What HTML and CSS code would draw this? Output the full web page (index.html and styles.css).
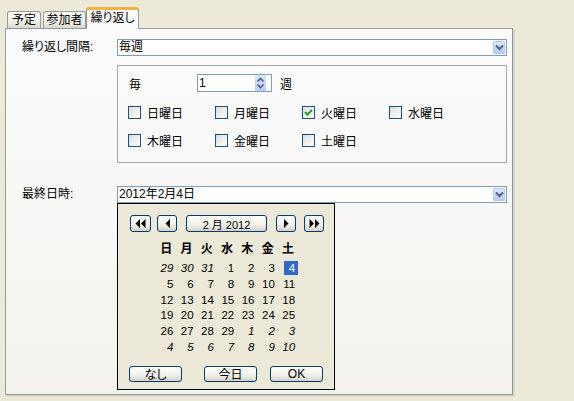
FILE: index.html
```html
<!DOCTYPE html>
<html lang="ja">
<head>
<meta charset="utf-8">
<title>繰り返し</title>
<link rel="stylesheet" href="styles.css">
</head>
<body>
<div class="tabs">
  <div class="tab t1">予定</div>
  <div class="tab t2">参加者</div>
  <div class="tab active">繰り返し</div>
</div>
<div class="panel">
  <div class="row">
    <span class="label">繰り返し間隔:</span>
    <div class="select">
      <span class="val">毎週</span>
      <span class="drop"><svg width="9" height="7" viewBox="0 0 9 7"><path d="M1 1.5 L4.5 5 L8 1.5" fill="none" stroke="#4d6185" stroke-width="2"/></svg></span>
    </div>
  </div>
  <div class="group">
    <div class="every">
      <span class="every-l">毎</span>
      <div class="spin">
        <span class="val">1</span>
        <span class="spinbtn"><svg width="11" height="16" viewBox="0 0 11 16"><path d="M2.5 6.5 L5.5 3.5 L8.5 6.5" fill="none" stroke="#4d6185" stroke-width="1.6"/><path d="M2.5 9.5 L5.5 12.5 L8.5 9.5" fill="none" stroke="#4d6185" stroke-width="1.6"/></svg></span>
      </div>
      <span class="every-r">週</span>
    </div>
    <div class="days">
      <div class="day"><span class="cb"></span><span>日曜日</span></div>
      <div class="day"><span class="cb"></span><span>月曜日</span></div>
      <div class="day"><span class="cb"><svg width="11" height="11" viewBox="0 0 11 11"><path d="M2 5 L4.5 7.5 L9 3" fill="none" stroke="#21a121" stroke-width="2"/></svg></span><span>火曜日</span></div>
      <div class="day"><span class="cb"></span><span>水曜日</span></div>
      <div class="day"><span class="cb"></span><span>木曜日</span></div>
      <div class="day"><span class="cb"></span><span>金曜日</span></div>
      <div class="day"><span class="cb"></span><span>土曜日</span></div>
    </div>
  </div>
  <div class="row row2">
    <span class="label">最終日時:</span>
    <div class="select">
      <span class="val">2012年2月4日</span>
      <span class="drop"><svg width="9" height="7" viewBox="0 0 9 7"><path d="M1 1.5 L4.5 5 L8 1.5" fill="none" stroke="#4d6185" stroke-width="2"/></svg></span>
    </div>
  </div>
  <div class="cal">
    <div class="cal-head">
      <span class="btn nb b1"><svg width="11" height="9" viewBox="0 0 11 9"><path d="M5 0 L0.5 4.5 L5 9 Z M10.5 0 L6 4.5 L10.5 9 Z" fill="#000"/></svg></span>
      <span class="btn nb b2"><svg width="5" height="9" viewBox="0 0 5 9"><path d="M5 0 L0.5 4.5 L5 9 Z" fill="#000"/></svg></span>
      <span class="btn month">2 月 2012</span>
      <span class="btn nb b4"><svg width="5" height="9" viewBox="0 0 5 9"><path d="M0 0 L4.5 4.5 L0 9 Z" fill="#000"/></svg></span>
      <span class="btn nb b5"><svg width="11" height="9" viewBox="0 0 11 9"><path d="M0.5 0 L5 4.5 L0.5 9 Z M6 0 L10.5 4.5 L6 9 Z" fill="#000"/></svg></span>
    </div>
    <div class="grid wk">
      <span>日</span><span>月</span><span>火</span><span>水</span><span>木</span><span>金</span><span>土</span>
    </div>
    <div class="grid dates">
      <span class="o">29</span><span class="o">30</span><span class="o">31</span><span>1</span><span>2</span><span>3</span><span><b class="sel">4</b></span>
      <span>5</span><span>6</span><span>7</span><span>8</span><span>9</span><span>10</span><span>11</span>
      <span>12</span><span>13</span><span>14</span><span>15</span><span>16</span><span>17</span><span>18</span>
      <span>19</span><span>20</span><span>21</span><span>22</span><span>23</span><span>24</span><span>25</span>
      <span>26</span><span>27</span><span>28</span><span>29</span><span class="o">1</span><span class="o">2</span><span class="o">3</span>
      <span class="o">4</span><span class="o">5</span><span class="o">6</span><span class="o">7</span><span class="o">8</span><span class="o">9</span><span class="o">10</span>
    </div>
    <div class="cal-foot">
      <span class="btn fb f1">なし</span>
      <span class="btn fb f2">今日</span>
      <span class="btn fb f3">OK</span>
    </div>
  </div>
</div>
</body>
</html>
```
FILE: styles.css
```css
html, body {
  margin: 0;
  padding: 0;
}
body {
  background: #ece9d8;
  width: 574px;
  height: 401px;
  overflow: hidden;
  font-family: "Liberation Sans", "Noto Sans CJK JP", sans-serif;
  font-size: 12px;
  font-feature-settings: "palt";
  color: #000;
}
.tabs {
  display: flex;
  align-items: flex-end;
  margin-top: 7px;
  height: 21px;
  padding-left: 7px;
}
.tab {
  box-sizing: border-box;
  height: 17px;
  border: 1px solid #919b9c;
  border-bottom: none;
  border-radius: 3px 3px 0 0;
  background: linear-gradient(#ffffff, #ecebe6 70%, #d8d5c9);
  font-size: 12px;
  line-height: 16px;
  text-align: center;
}
.t1 { width: 34px; margin-right: 2px; }
.t2 { width: 43px; }
.tab.active {
  width: 53px;
  height: 22px;
  margin-bottom: -1px;
  position: relative;
  z-index: 2;
  background: #fcfcfe;
  border-top: 3px solid #f5b142;
  line-height: 17px;
}
.panel {
  box-sizing: border-box;
  margin-left: 5px;
  width: 508px;
  height: 367px;
  border: 1px solid #919b9c;
  background: linear-gradient(#fcfcfe, #f3f2ec);
  box-shadow: 1px 1px 0 #d0cdbd, 2px 2px 0 #e2dfcf;
  padding: 10px 0 0 16px;
}
.row {
  display: flex;
  align-items: center;
  height: 17px;
}
.label {
  width: 95px;
  line-height: 17px;
}
.select {
  box-sizing: border-box;
  width: 390px;
  height: 17px;
  border: 1px solid #7f9db9;
  background: #fff;
  display: flex;
  align-items: center;
  justify-content: space-between;
}
.val {
  padding-left: 1px;
  line-height: 15px;
}
.drop {
  width: 12px;
  height: 13px;
  margin-right: 1px;
  box-sizing: border-box;
  border: 1px solid #b7c9f3;
  border-radius: 1px;
  background: linear-gradient(#dae5fd, #b8cbf6);
  display: flex;
  align-items: center;
  justify-content: center;
}
.group {
  box-sizing: border-box;
  margin: 9px 0 0 95px;
  width: 390px;
  height: 98px;
  border: 1px solid #a7a6aa;
  padding: 8px 0 0 11px;
}
.every {
  display: flex;
  align-items: center;
  height: 18px;
}
.every-l {
  width: 68px;
}
.spin {
  box-sizing: border-box;
  width: 75px;
  height: 18px;
  border: 1px solid #7f9db9;
  background: #fff;
  display: flex;
  align-items: center;
  justify-content: space-between;
}
.spinbtn {
  width: 11px;
  height: 16px;
  margin-right: 5px;
  background: linear-gradient(#dae5fd, #b8cbf6);
  display: flex;
}
.every-r {
  margin-left: 8px;
}
.days {
  display: grid;
  grid-template-columns: repeat(4, 87px);
  grid-auto-rows: 20px;
  row-gap: 8px;
  margin-top: 10px;
  margin-left: -1px;
}
.day {
  display: flex;
  align-items: center;
  gap: 6px;
}
.cb {
  box-sizing: border-box;
  width: 13px;
  height: 13px;
  border: 1px solid #1c5180;
  background: linear-gradient(135deg, #dcdcd7, #ffffff);
  display: flex;
  align-items: center;
  justify-content: center;
}
.row2 {
  margin-top: 23px;
}
.cal {
  box-sizing: border-box;
  margin-left: 95px;
  width: 218px;
  height: 187px;
  border: 1px solid #000;
  background: #ece9d8;
  padding: 11px 0 0 12px;
}
.cal-head {
  display: flex;
  height: 17px;
}
.btn {
  box-sizing: border-box;
  border: 1px solid #003c74;
  border-radius: 3px;
  background: linear-gradient(#ffffff, #f0f0ea 60%, #d6d0c5);
  display: flex;
  align-items: center;
  justify-content: center;
  font-size: 11px;
}
.nb { width: 20px; height: 17px; }
.b1 { width: 21px; margin-right: 6px; }
.b2 { margin-right: 9px; }
.month { width: 81px; height: 17px; margin-right: 9px; }
.b4 { margin-right: 8px; }
.grid {
  display: grid;
  grid-template-columns: repeat(7, 20.3px);
  margin-left: 26px;
}
.wk {
  margin-top: 9px;
  grid-auto-rows: 16px;
  font-weight: bold;
  text-align: center;
  line-height: 16px;
}
.dates {
  margin-top: 4px;
  grid-auto-rows: 15.8px;
  line-height: 15.8px;
  text-align: right;
  font-size: 11.5px;
}
.dates span {
  padding-right: 3px;
}
.dates .o {
  font-style: italic;
}
.sel {
  font-weight: normal;
  display: inline-block;
  background: #316ac5;
  color: #fff;
  width: 14px;
  line-height: 14px;
  padding-right: 3px;
  margin-right: -3px;
  box-sizing: border-box;
}
.cal-foot {
  display: flex;
  margin-top: 10px;
  margin-left: -1px;
}
.fb {
  width: 53px;
  height: 16px;
  font-size: 12px;
}
.f1 { margin-right: 22px; }
.f2 { margin-right: 13px; }
```
